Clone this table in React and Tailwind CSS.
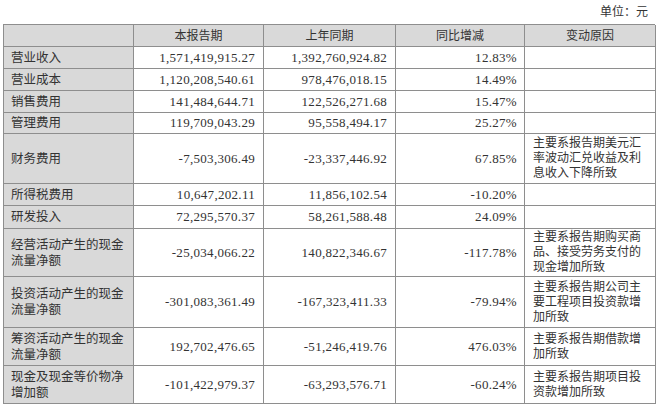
import React from 'react';

const rows = [
  { label: ['营业收入'], cur: '1,571,419,915.27', prev: '1,392,760,924.82', pct: '12.83%', reason: [], h: 'h-[22px]' },
  { label: ['营业成本'], cur: '1,120,208,540.61', prev: '978,476,018.15', pct: '14.49%', reason: [], h: 'h-[22px]' },
  { label: ['销售费用'], cur: '141,484,644.71', prev: '122,526,271.68', pct: '15.47%', reason: [], h: 'h-[22px]' },
  { label: ['管理费用'], cur: '119,709,043.29', prev: '95,558,494.17', pct: '25.27%', reason: [], h: 'h-[21px]' },
  { label: ['财务费用'], cur: '-7,503,306.49', prev: '-23,337,446.92', pct: '67.85%', reason: ['主要系报告期美元汇', '率波动汇兑收益及利', '息收入下降所致'], h: 'h-[50px]' },
  { label: ['所得税费用'], cur: '10,647,202.11', prev: '11,856,102.54', pct: '-10.20%', reason: [], h: 'h-[22px]' },
  { label: ['研发投入'], cur: '72,295,570.37', prev: '58,261,588.48', pct: '24.09%', reason: [], h: 'h-[23px]' },
  { label: ['经营活动产生的现金', '流量净额'], cur: '-25,034,066.22', prev: '140,822,346.67', pct: '-117.78%', reason: ['主要系报告期购买商', '品、接受劳务支付的', '现金增加所致'], h: 'h-[48px]' },
  { label: ['投资活动产生的现金', '流量净额'], cur: '-301,083,361.49', prev: '-167,323,411.33', pct: '-79.94%', reason: ['主要系报告期公司主', '要工程项目投资款增', '加所致'], h: 'h-[51px]' },
  { label: ['筹资活动产生的现金', '流量净额'], cur: '192,702,476.65', prev: '-51,246,419.76', pct: '476.03%', reason: ['主要系报告期借款增', '加所致'], h: 'h-[38px]' },
  { label: ['现金及现金等价物净', '增加额'], cur: '-101,422,979.37', prev: '-63,293,576.71', pct: '-60.24%', reason: ['主要系报告期项目投', '资款增加所致'], h: 'h-[38px]' },
];

const cell = 'border-r border-b border-[#8e8e8e] flex items-center';

export default function App() {
  return (
    <div className="w-[660px] h-[406px] bg-white text-[#333] font-['Liberation_Serif','Noto_Sans_CJK_SC',serif] overflow-hidden">
      <div className="h-[24px] flex items-center justify-end pr-[12px] text-[12px]">单位：元</div>
      <div className="ml-[3px] w-[652px] grid grid-cols-[130px_130px_132px_129px_131px] border-l border-t border-[#8e8e8e]">
        <div className={`${cell} h-[22px] bg-[#d9d9d9]`} />
        {['本报告期', '上年同期', '同比增减', '变动原因'].map((t) => (
          <div key={t} className={`${cell} h-[22px] bg-[#d9d9d9] justify-center text-[12px]`}>{t}</div>
        ))}
        {rows.map((r) => (
          <React.Fragment key={r.label[0]}>
            <div className={`${cell} ${r.h} bg-[#d9d9d9] pl-[7px] text-[12.5px] leading-[16px]`}>
              <div>
                {r.label.map((l) => (
                  <div key={l}>{l}</div>
                ))}
              </div>
            </div>
            <div className={`${cell} ${r.h} justify-end pr-[8px] text-[13px] tracking-[0.3px]`}>{r.cur}</div>
            <div className={`${cell} ${r.h} justify-end pr-[8px] text-[13px] tracking-[0.3px]`}>{r.prev}</div>
            <div className={`${cell} ${r.h} justify-end pr-[7px] text-[13px] tracking-[0.3px]`}>{r.pct}</div>
            <div className={`${cell} ${r.h} pl-[8px] text-[12px] leading-[15px]`}>
              <div>
                {r.reason.map((l) => (
                  <div key={l}>{l}</div>
                ))}
              </div>
            </div>
          </React.Fragment>
        ))}
      </div>
    </div>
  );
}
